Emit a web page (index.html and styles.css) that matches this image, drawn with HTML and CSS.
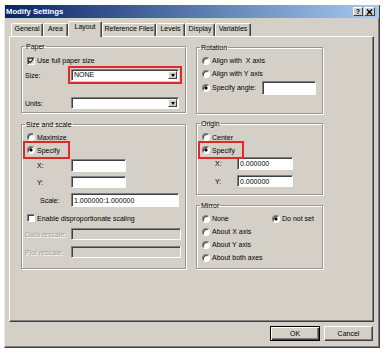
FILE: index.html
```html
<!DOCTYPE html>
<html lang="en">

<head>
  <meta charset="utf-8">
  <title>Modify Settings</title>

  <link rel="stylesheet" href="styles.css">
</head>

<body>
  <div class="window">
    <div class="titlebar">
      <span class="title">Modify Settings</span>
      <span class="capbtn help">?</span>
      <span class="capbtn close">
        <svg width="7" height="6" viewBox="0 0 7 6"><path d="M1 0.5 L6 5.5 M6 0.5 L1 5.5" stroke="#000" stroke-width="1.4" /></svg>
      </span>
    </div>

    <div class="tabs">
      <span class="tab tab-general">General</span>
      <span class="tab tab-area">Area</span>
      <span class="tab tab-layout active">Layout</span>
      <span class="tab tab-ref">Reference Files</span>
      <span class="tab tab-levels">Levels</span>
      <span class="tab tab-display">Display</span>
      <span class="tab tab-vars">Variables</span>
    </div>

    <div class="panel">
      <div class="col col-left">
        <fieldset class="group paper">
          <legend>Paper</legend>
          <div class="opt o-paper">
            <span class="check on"><svg width="6" height="6" viewBox="0 0 6 6"><path d="M0.8 3 L2.3 4.6 L5.2 1.2" fill="none" stroke="#222" stroke-width="1.1" /></svg></span>
            Use full paper size
          </div>
          <div class="field f-size">
            <span class="lbl">Size:</span>
            <div class="select mark"><span class="val">NONE</span><span class="arrow"><i></i></span></div>
          </div>
          <div class="field f-units">
            <span class="lbl">Units:</span>
            <div class="select"><span class="val"></span><span class="arrow"><i></i></span></div>
          </div>
        </fieldset>

        <fieldset class="group scale">
          <legend>Size and scale</legend>
          <div class="opt o-max"><span class="radio"></span>Maximize</div>
          <div class="opt o-spec mark mark-left"><span class="radio on"></span>Specify</div>
          <div class="field f-x">
            <span class="lbl pad-xy">X:</span>
            <span class="input w55"></span>
          </div>
          <div class="field f-y">
            <span class="lbl pad-xy">Y:</span>
            <span class="input w55"></span>
          </div>
          <div class="field f-scale">
            <span class="lbl pad-scale">Scale:</span>
            <span class="input w108">1.000000:1.000000</span>
          </div>
          <div class="opt o-enable"><span class="check"></span>Enable disproportionate scaling</div>
          <div class="field f-data disabled">
            <span class="lbl">Data rescale:</span>
            <span class="input off w110"></span>
          </div>
          <div class="field f-plot disabled">
            <span class="lbl">Plot rescale:</span>
            <span class="input off w110"></span>
          </div>
        </fieldset>
      </div>

      <div class="col col-right">
        <fieldset class="group rotation">
          <legend>Rotation</legend>
          <div class="opt o-rot"><span class="radio"></span>Align with &nbsp;X axis</div>
          <div class="opt o-rot"><span class="radio"></span>Align with Y axis</div>
          <div class="opt o-angle"><span class="radio on"></span>Specify angle:<span class="input w54 angle"></span></div>
        </fieldset>

        <fieldset class="group origin">
          <legend>Origin</legend>
          <div class="opt o-center"><span class="radio"></span>Center</div>
          <div class="opt o-spec mark mark-right"><span class="radio on"></span>Specify</div>
          <div class="field f-ox">
            <span class="lbl">X:</span>
            <span class="input w56">0.000000</span>
          </div>
          <div class="field f-oy">
            <span class="lbl">Y:</span>
            <span class="input w56">0.000000</span>
          </div>
        </fieldset>

        <fieldset class="group mirror">
          <legend>Mirror</legend>
          <div class="mgrid">
            <div class="opt"><span class="radio"></span>None</div>
            <div class="opt"><span class="radio on"></span>Do not set</div>
            <div class="opt"><span class="radio"></span>About X axis</div>
            <div></div>
            <div class="opt"><span class="radio"></span>About Y axis</div>
            <div></div>
            <div class="opt"><span class="radio"></span>About both axes</div>
          </div>
        </fieldset>
      </div>
    </div>

    <div class="footer">
      <button class="btn default">OK</button>
      <button class="btn cancel">Cancel</button>
    </div>
  </div>
</body>

</html>
```

FILE: styles.css
```css
* {
  box-sizing: border-box;
}

body {
  margin: 0;
  background: #fff;
  font-family: "Liberation Sans", Arial, sans-serif;
  font-size: 7px;
  color: #000;
}

/* dialog frame */
.window {
  display: flex;
  flex-direction: column;
  width: 376px;
  height: 343px;
  margin: 5px 0 0 4px;
  background: #d4d0c8;
  border-left: 1px solid #ece9e2;
  border-right: 1px solid #404040;
  border-bottom: 1px solid #404040;
  box-shadow: inset -1px -1px 0 #808080;
}

.titlebar {
  display: flex;
  align-items: center;
  gap: 1px;
  flex: none;
  height: 13px;
  padding: 0 4px 0 1px;
  background: linear-gradient(to right, #0a246a, #a6caf0);
}

.title {
  flex: 1;
  color: #fff;
  font-weight: bold;
  font-size: 7.7px;
}

.capbtn {
  display: flex;
  align-items: center;
  justify-content: center;
  width: 10px;
  height: 9px;
  background: #d4d0c8;
  border: 1px solid;
  border-color: #fff #404040 #404040 #fff;
  font-weight: bold;
  font-size: 7px;
  line-height: 1;
}

.capbtn.close {
  width: 11px;
}

/* tabs */
.tabs {
  display: flex;
  align-items: flex-end;
  flex: none;
  height: 18px;
  padding-left: 6px;
}

.tab {
  height: 13px;
  line-height: 9px;
  text-align: center;
  white-space: nowrap;
  border-top: 1px solid #fff;
  border-left: 1px solid #fff;
  border-right: 1px solid #404040;
  border-radius: 2px 2px 0 0;
  box-shadow: inset -1px 0 0 #808080;
}

.tab.active {
  position: relative;
  z-index: 1;
  height: 16px;
  margin-bottom: -1px;
  line-height: 10px;
  background: #d4d0c8;
}

.tab-general { width: 32px; }
.tab-area { width: 25px; }
.tab-layout { width: 34px; }
.tab-ref { width: 54px; }
.tab-levels { width: 29px; }
.tab-display { width: 30px; }
.tab-vars { width: 36px; }

.panel {
  display: flex;
  gap: 10px;
  flex: none;
  width: 365px;
  height: 286px;
  margin-left: 4px;
  padding: 5px 0 0 11px;
  border: 1px solid;
  border-color: #fff #404040 #404040 #fff;
  box-shadow: inset -1px -1px 0 #808080;
}

.col {
  display: flex;
  flex-direction: column;
}

.col-left {
  width: 165px;
}

.col-right {
  width: 127px;
  margin-top: 1px;
}

/* group boxes */
.group {
  margin: 0;
  padding: 0 3px;
  min-width: 0;
  border: 1px solid #9a968f;
  box-shadow: 1px 1px 0 #fff, inset 1px 1px 0 #fff;
}

.group legend {
  padding: 0 1px;
  line-height: 9px;
}

.opt {
  display: flex;
  align-items: center;
  gap: 2px;
  padding-left: 2px;
}

.field {
  display: flex;
  align-items: center;
}

.lbl {
  flex: none;
  width: 46px;
  white-space: nowrap;
}

.pad-xy { padding-left: 12px; }
.pad-scale { padding-left: 15px; }

/* controls */
.radio {
  flex: none;
  width: 8px;
  height: 8px;
  border-radius: 50%;
  border: 1px solid;
  border-color: #808080 #fff #fff #808080;
  background: #fff;
  box-shadow: inset 1px 1px 0 #404040;
}

.radio.on {
  background: radial-gradient(circle, #000 0 1.3px, #fff 1.8px);
}

.check {
  display: flex;
  align-items: center;
  justify-content: center;
  flex: none;
  width: 8px;
  height: 8px;
  border: 1px solid;
  border-color: #808080 #fff #fff #808080;
  background: #fff;
  box-shadow: inset 1px 1px 0 #404040;
}

.check.on {
  background: #dedbd5;
}

.select {
  display: flex;
  width: 108px;
  height: 12px;
  padding: 1px;
  background: #fff;
  border: 1px solid;
  border-color: #808080 #fff #fff #808080;
  box-shadow: inset 1px 1px 0 #404040;
}

.select .val {
  flex: 1;
  padding-left: 1px;
  line-height: 8px;
}

.arrow {
  display: flex;
  align-items: center;
  justify-content: center;
  width: 9px;
  background: #d4d0c8;
  border: 1px solid;
  border-color: #fff #404040 #404040 #fff;
}

.arrow i {
  width: 0;
  height: 0;
  border-left: 2.5px solid transparent;
  border-right: 2.5px solid transparent;
  border-top: 3px solid #000;
}

.input {
  display: flex;
  align-items: center;
  height: 100%;
  padding: 0 2px;
  background: #fff;
  border: 1px solid;
  border-color: #808080 #fff #fff #808080;
  box-shadow: inset 1px 1px 0 #404040;
  white-space: nowrap;
}

.input.off {
  background: #d4d0c8;
}

.disabled .lbl {
  color: #a4a098;
  text-shadow: 1px 1px 0 #fff;
}

.w54 { width: 54px; }
.w55 { width: 55px; }
.w56 { width: 56px; }
.w108 { width: 108px; }
.w110 { width: 110px; }

/* red annotation frames */
.mark {
  outline: 2px solid #e0282a;
}

.select.mark {
  outline-offset: 1px;
}

.mark-left { width: 43px; }
.mark-right { width: 42px; }

/* paper */
.paper {
  height: 71px;
  padding-top: 3px;
}

.o-paper { height: 13px; }
.f-size { height: 16px; }
.f-units { height: 12px; margin-top: 14px; }

/* size and scale */
.scale {
  height: 149px;
  margin-top: 7px;
  padding-top: 2px;
}

.o-max { height: 12px; }
.o-spec { height: 14px; }
.f-x { height: 13px; margin-top: 2px; }
.f-y { height: 12px; margin-top: 4px; }
.f-scale { height: 14px; margin-top: 5px; }
.o-enable { height: 12px; margin-top: 5px; }
.f-data { height: 12px; margin-top: 4px; }
.f-plot { height: 12px; margin-top: 6px; }

/* rotation */
.rotation {
  height: 71px;
  padding-top: 2px;
}

.o-rot { height: 13px; }
.o-angle { height: 15px; }

.angle {
  height: 14px;
  margin-left: auto;
  margin-right: 3px;
}

/* origin */
.origin {
  height: 76px;
  margin-top: 5px;
  padding-top: 3px;
}

.origin .lbl {
  width: 37px;
  padding-left: 15px;
}

.o-center { height: 12px; }
.f-ox { height: 13px; }
.f-oy { height: 12px; margin-top: 5px; }

/* mirror */
.mirror {
  height: 68px;
  margin-top: 6px;
  padding-top: 2px;
}

.mgrid {
  display: grid;
  grid-template-columns: 70px auto;
  grid-auto-rows: 13px;
}

/* buttons */
.footer {
  display: flex;
  justify-content: flex-end;
  gap: 4px;
  margin-top: 4px;
  padding-right: 6px;
}

.btn {
  width: 50px;
  height: 15px;
  padding: 0;
  font: inherit;
  color: #000;
  background: #d4d0c8;
  border: 1px solid;
  border-color: #fff #404040 #404040 #fff;
  box-shadow: inset -1px -1px 0 #808080;
}

.btn.default {
  border-color: #000;
  box-shadow: inset 1px 1px 0 #fff, inset -1px -1px 0 #404040, inset -2px -2px 0 #808080;
}

.btn.cancel {
  width: 49px;
}
```
